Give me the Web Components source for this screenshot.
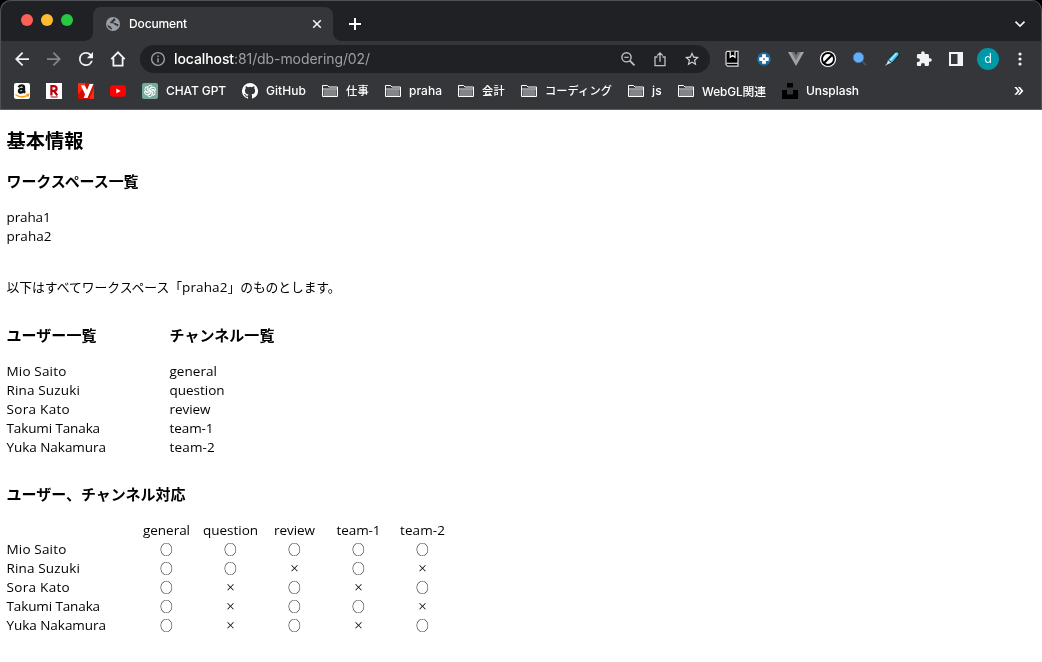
<!DOCTYPE html>
<html lang="ja">
<head>
<meta charset="utf-8">
<title>Document</title>
<style>
  html, body { margin: 0; padding: 0; background: #fff; }
  body { width: 1042px; height: 662px; overflow: hidden; font-family: Inter, "Noto Sans CJK JP", sans-serif; }
</style>
</head>
<body>
<browser-window></browser-window>
<script>
const define = (name, html, init) => {
  const t = document.createElement('template');
  t.innerHTML = html;
  customElements.define(name, class extends HTMLElement {
    connectedCallback() {
      if (this.shadowRoot) return;
      this.attachShadow({ mode: 'open' }).append(t.content.cloneNode(true));
      if (init) init(this, this.shadowRoot);
    }
  });
};

/* A line of text tracked so that it fills exactly w pixels. */
define('fit-text', `<style>:host{display:inline-block;white-space:nowrap;flex:none}span{display:inline-block}</style><span></span>`,
  (el, root) => {
    const s = root.querySelector('span');
    s.textContent = el.getAttribute('text');
    const w = +el.getAttribute('w');
    if (w) {
      s.style.letterSpacing = (w - s.getBoundingClientRect().width) / [...s.textContent].length + 'px';
      el.style.width = w + 'px';
    }
  });

const ICONS = {
  back: ['0 0 24 24', '<path fill="#f1f3f4" d="M20 11H7.83l5.59-5.59L12 4l-8 8 8 8 1.41-1.41L7.83 13H20v-2z"/>', 21],
  forward: ['0 0 24 24', '<path fill="#85868a" d="M12 4l-1.41 1.41L16.17 11H4v2h12.17l-5.58 5.59L12 20l8-8z"/>', 21],
  reload: ['0 0 24 24', '<path fill="#f1f3f4" d="M17.65 6.35A7.96 7.96 0 0 0 12 4a8 8 0 1 0 7.73 10h-2.08A6 6 0 1 1 12 6c1.66 0 3.14.69 4.22 1.78L13 11h7V4l-2.35 2.35z"/>', 21],
  home: ['0 0 16 16', '<path fill="none" stroke="#f1f3f4" stroke-width="1.8" d="M1.3 8.2 8 1.4l6.7 6.8M3.4 7v7.6h9.2V7"/>', 16],
  info: ['0 0 24 24', '<path fill="#9aa0a6" d="M11 17h2v-6h-2v6zm1-15a10 10 0 1 0 0 20 10 10 0 0 0 0-20zm0 18a8 8 0 1 1 0-16 8 8 0 0 1 0 16zM11 9h2V7h-2v2z"/>', 17],
  zoomout: ['0 0 16 16', '<g fill="none" stroke="#bdc1c6" stroke-width="1.4"><circle cx="6.5" cy="6.3" r="4.6"/><path stroke-width="1.8" d="m9.8 9.6 4.700 4.800"/><path stroke-width="1.2" d="M4.300 6.300h4.400"/></g>', 16],
  share: ['0 0 16 16', '<path fill="none" stroke="#bdc1c6" stroke-width="1.3" d="M5.500 6H3v8.600h10V6h-2.500M8 10.700V2M5.200 4.600 8 1.800l2.800 2.800"/>', 16],
  star: ['0 0 24 24', '<path fill="#d0d3d6" d="m22 9.240-7.190-.620L12 2 9.190 8.630 2 9.240l5.460 4.730L5.820 21 12 17.270 18.180 21l-1.630-7.030L22 9.240zM12 15.400l-3.760 2.270 1-4.280-3.320-2.880 4.380-.380L12 6.100l1.710 4.040 4.380.380-3.320 2.880 1 4.280L12 15.400z"/>', 17],
  book: ['0 0 16 18', '<path fill="#000" stroke="#dcdcdc" stroke-width="1.200" d="M3.200 1.400h10.800v14.800H3.600L2 14.600V2.600z"/><path d="M2.500 13.300H14" stroke="#dcdcdc" stroke-width="1.200"/><path fill="#000" stroke="#fff" stroke-width="1.200" d="M6.200 1.400v5.800L8.600 5.400 11 7.200V1.400"/>', 16, 18],
  cross: ['0 0 16 16', '<circle cx="8" cy="8" r="7.200" fill="#236d9d"/><path fill="#fff" d="M6 3h4v3h3v4h-3v3H6v-3H3V6h3z"/><path fill="#236d9d" d="M7.100 7.100h1.800v1.800H7.100z"/>', 15],
  vue: ['0 0 16 14', '<path fill="#a1a2a3" d="M0 0h16L8 14z"/><path fill="#747578" d="M3.200 0h9.600L8 8.500z"/><path fill="#35363a" d="M6.100 0h3.800L8 3.300z"/>', 16, 14],
  ban: ['0 0 18 18', '<circle cx="9" cy="9" r="8.600" fill="#fff"/><circle cx="9" cy="9" r="6.300" fill="#fff" stroke="#000" stroke-width="2"/><path d="m5 13 8-8" stroke="#000" stroke-width="2.200"/>', 17],
  lens: ['0 0 16 16', '<path d="m9.500 9.500 4.700 4.700" stroke="#4c4f54" stroke-width="2"/><circle cx="6.500" cy="6.500" r="5.300" fill="#62aef8" stroke="#396f9f" stroke-width=".7"/>', 16],
  pen: ['0 0 16 16', '<path fill="#39bde6" stroke="#111c22" stroke-width="1" d="M11.200 1.200q2.400-1.200 3.800.6.700 1.200-.3 2.400L8 12.200 3.800 8.600z"/><path d="m6.300 9.300 6.400-7.200" stroke="#98e8fc" stroke-width="2"/><path fill="#c9eef4" stroke="#142630" stroke-width=".6" d="M3.800 8.600 8 12.200l-3.200.9L1 15.300.8 14.800 2.800 12z"/>', 16],
  puzzle: ['0 0 24 24', '<path fill="#f1f3f4" d="M20.500 11H19V7a2 2 0 0 0-2-2h-4V3.500a2.500 2.500 0 0 0-5 0V5H4a2 2 0 0 0-2 2v3.800h1.500a2.700 2.700 0 0 1 0 5.400H2V20c0 1.100.9 2 2 2h3.800v-1.500a2.700 2.700 0 0 1 5.400 0V22H17a2 2 0 0 0 2-2v-4h1.500a2.500 2.500 0 0 0 0-5z"/>', 17],
  panel: ['0 0 14 14', '<path fill="#f1f3f4" d="M0 0h14v14H0z"/><path fill="#35363a" d="M2 2h6.500v10H2z"/>', 14],
  dots: ['0 0 4 14', '<g fill="#f1f3f4"><circle cx="2" cy="2" r="1.600"/><circle cx="2" cy="7" r="1.600"/><circle cx="2" cy="12" r="1.600"/></g>', 4, 14],
  chevron: ['0 0 12 8', '<path fill="none" stroke="#f1f3f4" stroke-width="1.700" d="M1.500 1.700 6 6.100l4.500-4.400"/>', 12, 8],
  close: ['0 0 10 10', '<path stroke="#f1f3f4" stroke-width="1.600" d="m1.200 1.200 7.600 7.600M8.800 1.200 1.200 8.800"/>', 10],
  plus: ['0 0 12 12', '<path stroke="#fff" stroke-width="2" d="M6 0v12M0 6h12"/>', 12],
  globe: ['0 0 14 14', '<circle cx="7" cy="7" r="7" fill="#9aa0a6"/><path fill="#35363a" d="M7.500 1.300q-.2 1.900-1.900 2 .2 1.600-1.500 1.500l.2 1.500h2.500q1.800.2 1.800 2H9.800q1.200 0 1.400 1.300L10.100 11q2.300-1.400 2.400-4l-1.600-.1-1-.9H7.700l.1-1.800 1.500-.4.1-1.800q-.8-.6-1.900-.7zM1.500 7.200q.1 4.200 4.400 5.300l.1-1.800H4.700L4.600 9l-1.800-.2z"/>', 14],
  amazon: ['0 0 16 16', '<rect width="16" height="16" rx="2" fill="#fff"/><path fill="none" stroke="#111" stroke-width="2.400" d="M4.800 4.400q.5-2 2.900-2 2.300 0 2.300 2.200v3.200q0 1 1.100 1.900M10 5.700Q5 5.500 5 7.900q0 1.600 1.600 1.600 2.400 0 3.400-2.300"/><path fill="none" stroke="#f5a11c" stroke-width="1.500" d="M1.400 11.500q6 4.200 12 1M12.300 11.500l2.300-.2-.6 2.200"/>', 16],
  rakuten: ['0 0 16 16', '<path fill="#fff" d="M0 0h16v16H0z"/><path fill="none" stroke="#b8000c" stroke-width="2.200" d="M5.400 12.400V3.100h2.400q2.800 0 2.800 2.400T7.800 7.900H5.400M8 8l3.300 4.400"/><path fill="#b8000c" d="M4 13.400h8.300l-1.200 1.200H5.200z"/>', 16],
  yahoo: ['0 0 16 16', '<path fill="#d40c00" d="M0 0h16v16H0z"/><path fill="#ff2a10" d="M0 0h7v4L0 11zM11 16l5-11v11z"/><path fill="#fff" d="M2.800 2.300h4L9 7l2.600-6h3.800L9.500 15H5.600l1.500-3.400z"/>', 16],
  youtube: ['0 0 16 12', '<rect y=".3" width="16" height="11.400" rx="3" fill="#f00"/><path fill="#fff" d="M6.300 3.600 10.600 6l-4.300 2.400z"/>', 16, 12],
  gpt: ['0 0 16 16', '<rect width="16" height="16" rx="2" fill="#75a99c"/><g fill="none" stroke="#fff" stroke-width=".95">' +
    [0, 60, 120, 180, 240, 300].map(a => `<path d="M6 7V4.300q.3-2 2.300-2 1.400.1 2 1.100L7.700 5v3.100" transform="rotate(${a} 8 8)"/>`).join('') + '</g>', 16],
  github: ['0 0 16 16', '<path fill="#fff" d="M8 0a8 8 0 0 0-2.530 15.590c.4.070.55-.17.55-.38v-1.490c-2.010.37-2.530-.49-2.690-.94-.09-.23-.48-.94-.82-1.130-.28-.15-.68-.52-.01-.53.630-.01 1.080.58 1.230.82.720 1.210 1.870.870 2.330.660.070-.520.280-.870.510-1.070-1.780-.2-3.640-.890-3.640-3.950 0-.870.310-1.590.820-2.150-.080-.2-.360-1.020.080-2.120 0 0 .670-.210 2.200.820a7.600 7.600 0 0 1 4 0c1.530-1.040 2.200-.820 2.200-.820.440 1.100.160 1.920.080 2.120.510.560.820 1.270.820 2.150 0 3.070-1.870 3.750-3.650 3.950.290.250.540.730.540 1.480v2.200c0 .210.150.460.550.380A8 8 0 0 0 8 0z"/>', 16],
  folder: ['0 0 16 14', '<path fill="none" stroke="#fff" d="M.5 12.500v-11h5l1.500 1.500h8.500v9.500z"/><path fill="#838488" d="M1.500 5.800h13V12h-13z"/><path d="M1 5h14" stroke="#fff" stroke-width=".9"/>', 16, 14],
  unsplash: ['0 0 16 16', '<path fill="#000" d="M5 0h6v4.500H5zM0 7h5v4.500h6V7h5v9H0z"/>', 16]
};

define('ui-icon', `<style>:host{display:flex;align-items:center;justify-content:center;flex:none}svg{display:block}</style>`,
  (el, root) => {
    let [vb, body, w, h = w] = ICONS[el.getAttribute('name')];
    /* An odd size gets a one pixel larger canvas, so that its centre stays on a whole pixel. */
    if (w % 2) {
      const n = +vb.split(' ')[2], pad = n / w / 2;
      vb = `${-pad} ${-pad} ${n + 2 * pad} ${n + 2 * pad}`;
      w = h = w + 1;
    }
    root.innerHTML += `<svg viewBox="${vb}" width="${w}" height="${h}">${body}</svg>`;
  });

define('tab-strip', `<style>
  :host{display:flex;height:41px;background:#202124;box-sizing:border-box;padding-left:21px}
  .lights{display:flex;gap:8px;padding-top:14px;width:72px}
  i{width:12px;height:12px;border-radius:50%}
  .tab{width:240px;height:34px;margin-top:7px;background:#35363a;border-radius:8px 8px 0 0;display:flex;align-items:center;box-sizing:border-box;padding:0 11px 0 13px;position:relative;color:#fff;font-size:12px;font-weight:500}
  .tab::before,.tab::after{content:"";position:absolute;bottom:0;width:8px;height:8px}
  .tab::before{left:-8px;background:radial-gradient(circle at 0 0,transparent 7.500px,#35363a 8px)}
  .tab::after{right:-8px;background:radial-gradient(circle at 100% 0,transparent 7.500px,#35363a 8px)}
  fit-text{padding-bottom:2px}
  .g{margin-right:9px}.x{margin-left:auto}
  .new{width:44px;height:34px;margin-top:7px}.more{margin-left:auto;width:44px;height:34px;margin-top:7px}
</style>
<div class="lights"><i style="background:#ff5f57"></i><i style="background:#febc2e"></i><i style="background:#28c840"></i></div>
<div class="tab"><ui-icon class="g" name="globe"></ui-icon><fit-text text="Document" w="58"></fit-text><ui-icon class="x" name="close"></ui-icon></div>
<ui-icon class="new" name="plus"></ui-icon><ui-icon class="more" name="chevron"></ui-icon>`);

define('nav-bar', `<style>
  :host{display:flex;height:36px;align-items:center;padding-left:6px;box-sizing:border-box}
  ui-icon,.avatar{width:32px;height:28px}
  .box{width:570px;height:28px;border-radius:14px;background:#202124;display:flex;align-items:center;margin:0 6px 0 6px;box-sizing:border-box;padding:0 2px;font-size:14px;color:#9aa0a6}
  fit-text{padding-bottom:2px}
  .host{color:#fff;font-weight:500}.zoom{margin-left:auto}
  .avatar{display:flex;align-items:center;justify-content:center}
  .avatar span{width:22px;height:22px;border-radius:50%;background:#0097a7;color:#e8ffff;font-size:12.500px;line-height:22px;text-align:center}
</style>
<ui-icon name="back"></ui-icon><ui-icon name="forward"></ui-icon><ui-icon name="reload"></ui-icon><ui-icon name="home"></ui-icon>
<div class="box"><ui-icon name="info"></ui-icon><fit-text class="host" text="localhost" w="60"></fit-text><fit-text text=":81/db-modering/02/" w="136"></fit-text>
<ui-icon class="zoom" name="zoomout"></ui-icon><ui-icon name="share"></ui-icon><ui-icon name="star"></ui-icon></div>
<ui-icon name="book"></ui-icon><ui-icon name="cross"></ui-icon><ui-icon name="vue"></ui-icon><ui-icon name="ban"></ui-icon><ui-icon name="lens"></ui-icon><ui-icon name="pen"></ui-icon><ui-icon name="puzzle"></ui-icon><ui-icon name="panel"></ui-icon>
<div class="avatar"><span>d</span></div><ui-icon name="dots"></ui-icon>`);

define('book-mark', `<style>:host{display:flex;align-items:center;gap:8px;flex:none;height:28px}ui-icon{width:16px}fit-text{padding-bottom:2px}</style><slot></slot>`,
  (el, root) => {
    root.innerHTML = root.innerHTML.replace('<slot></slot>', `<ui-icon name="${el.getAttribute('icon')}"></ui-icon>` +
      (el.hasAttribute('text') ? `<fit-text text="${el.getAttribute('text')}" w="${el.getAttribute('w')}"></fit-text>` : ''));
  });

define('bookmark-bar', `<style>
  :host{display:flex;height:28px;gap:16px;padding:0 18px 4px 14px;align-items:center;color:#fff;font-size:12px;font-weight:500}
  .jp{font-size:11.200px}
  .more{margin-left:auto;font-size:17px;line-height:24px;padding-bottom:3px}
</style>
<book-mark icon="amazon"></book-mark><book-mark icon="rakuten"></book-mark><book-mark icon="yahoo"></book-mark><book-mark icon="youtube"></book-mark>
<book-mark icon="gpt" text="CHAT GPT" w="60"></book-mark><book-mark icon="github" text="GitHub" w="40"></book-mark>
<book-mark class="jp" icon="folder" text="仕事" w="23"></book-mark><book-mark icon="folder" text="praha" w="33"></book-mark>
<book-mark class="jp" icon="folder" text="会計" w="23"></book-mark><book-mark class="jp" icon="folder" text="コーディング" w="67"></book-mark>
<book-mark icon="folder" text="js" w="10"></book-mark><book-mark icon="folder" text="WebGL関連" w="64" style="font-size:11.800px"></book-mark>
<book-mark icon="unsplash" text="Unsplash" w="53"></book-mark><span class="more">»</span>`);

define('text-list', `<style>
  :host{display:block}
  h3{margin:0;font:700 15px/20px "Noto Sans CJK JP",sans-serif;height:20px}
  ul{margin:17px 0 0;padding:0;list-style:none}
  li{height:19px;line-height:19px;display:flex}
</style><h3></h3><ul></ul>`, (el, root) => {
  const [t, w] = el.getAttribute('heading').split('|');
  root.querySelector('h3').innerHTML = `<fit-text text="${t}" w="${w}"></fit-text>`;
  root.querySelector('ul').innerHTML = el.getAttribute('items').split(',').map(s => {
    const [a, b] = s.split('|');
    return `<li><fit-text text="${a}" w="${b}"></fit-text></li>`;
  }).join('');
});

define('channel-matrix', `<style>
  :host{display:grid;grid-template-columns:128px repeat(5,64px);grid-auto-rows:19px;line-height:19px}
  div{display:flex;justify-content:center}
  .n{justify-content:flex-start}
  .o{font:12.800px/17px "Noto Sans CJK JP",sans-serif}
  .x{font:500 10px/18px "Noto Sans CJK JP",sans-serif}
</style>`, (el, root) => {
  const cell = (s, c = '') => { const [a, b] = s.split('|'); return `<div class="${c}">${b ? `<fit-text text="${a}" w="${b}"></fit-text>` : a}</div>`; };
  const rows = { 'Mio Saito|60': '○○○○○', 'Rina Suzuki|73.5': '○○×○×', 'Sora Kato|63.5': '○×○×○', 'Takumi Tanaka|93.5': '○×○○×', 'Yuka Nakamura|99.5': '○×○×○' };
  root.innerHTML += cell('') + ['general|47', 'question|55', 'review|41', 'team-1|44', 'team-2|45'].map(s => cell(s)).join('') +
    Object.entries(rows).map(([n, m]) => cell(n, 'n') + [...m].map(c => cell(c, c === '○' ? 'o' : 'x')).join('')).join('');
});

define('page-content', `<style>
  :host{display:flex;flex-direction:column;padding:18px 6.500px 0;color:#000;font:13.500px/19px "Open Sans","Noto Sans CJK JP",sans-serif;will-change:transform}
  h2{margin:0 0 19px;height:24px;font:700 19.200px/24px "Noto Sans CJK JP",sans-serif}
  p{margin:32px 0 28px;height:19px;display:flex;line-height:19px}
  .jp{font-size:12.800px}
  .cols{display:flex;margin-bottom:27px}.cols>:first-child{width:163px}
  h3{margin:0 0 17px;font:700 15px/20px "Noto Sans CJK JP",sans-serif;height:20px}
</style>
<h2><fit-text text="基本情報" w="77"></fit-text></h2>
<text-list heading="ワークスペース一覧|132" items="praha1|44,praha2|45"></text-list>
<p><fit-text class="jp" text="以下はすべてワークスペース「" w="175.500"></fit-text><fit-text text="praha2" w="45.500"></fit-text><fit-text class="jp" text="」のものとします。" w="113"></fit-text></p>
<div class="cols">
<text-list heading="ユーザー一覧|90" items="Mio Saito|60,Rina Suzuki|73.5,Sora Kato|63.5,Takumi Tanaka|93.5,Yuka Nakamura|99.5"></text-list>
<text-list heading="チャンネル一覧|105" items="general|47.5,question|55,review|41,team-1|44,team-2|45.5"></text-list>
</div>
<h3><fit-text text="ユーザー、チャンネル対応" w="179"></fit-text></h3>
<channel-matrix></channel-matrix>`);

define('browser-window', `<style>
  :host{display:block;width:1042px;height:662px}
  .back{background:#000}
  header{height:110px;box-sizing:border-box;background:#35363a;border-bottom:1px solid #5b5c5f;border-radius:10px 10px 0 0;overflow:hidden;position:relative;will-change:transform}
  header::after{content:"";position:absolute;inset:0;border-radius:10px 10px 0 0;box-shadow:inset 1px 1px 0 #505154,inset -1px 0 0 #505154}
</style>
<div class="back"><header><tab-strip></tab-strip><nav-bar></nav-bar><bookmark-bar></bookmark-bar></header></div>
<page-content></page-content>`);
</script>
</body>
</html>
